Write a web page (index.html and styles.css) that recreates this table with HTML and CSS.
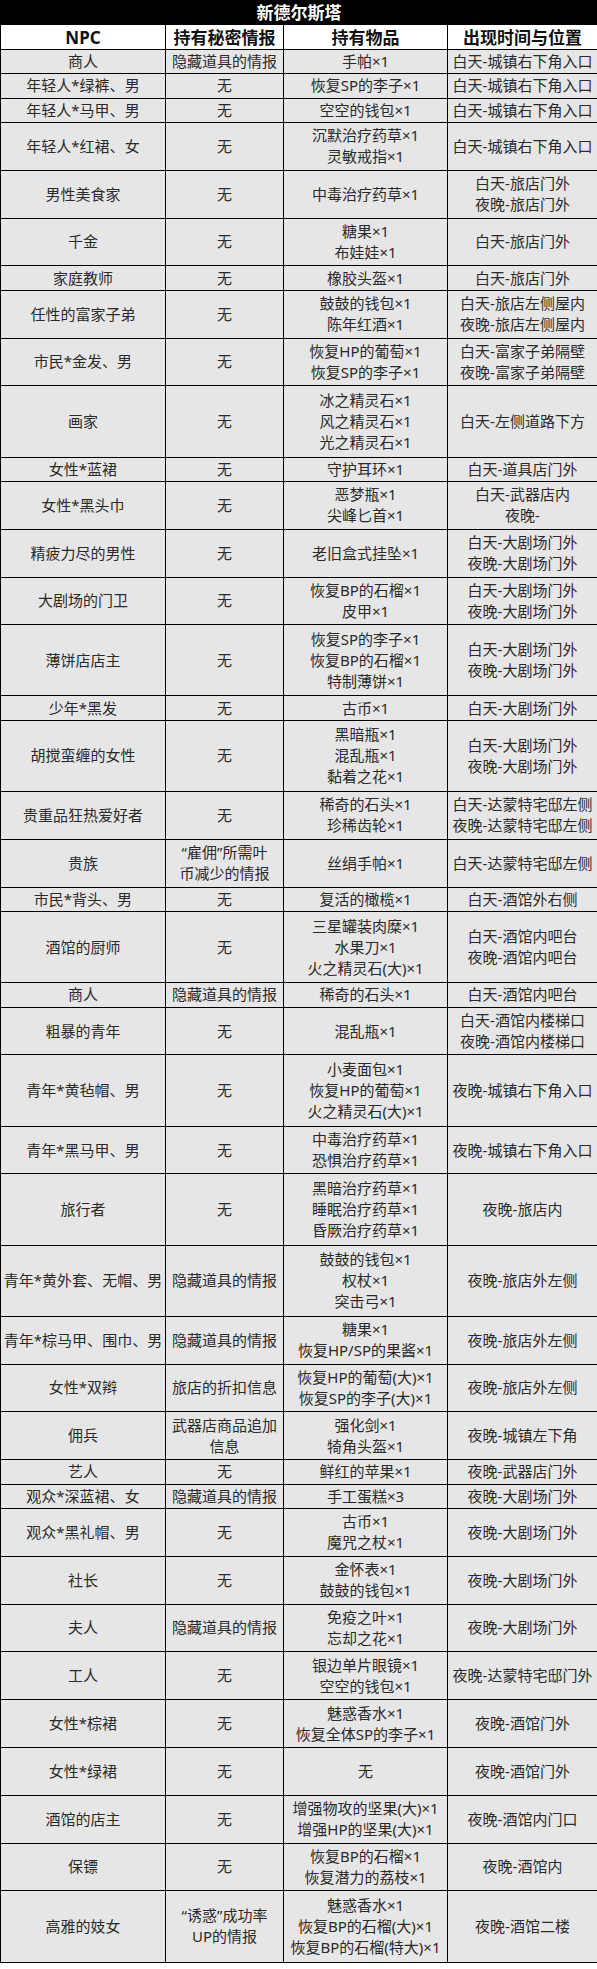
FILE: index.html
```html
<!DOCTYPE html>
<html lang="zh-CN">
<head>
<meta charset="utf-8">
<title>新德尔斯塔</title>
<link rel="stylesheet" href="styles.css">
</head>
<body>
<table class="npc">
  <colgroup>
    <col class="c-npc"><col class="c-info"><col class="c-item"><col class="c-loc">
  </colgroup>
  <thead>
    <tr class="title"><th colspan="4">新德尔斯塔</th></tr>
    <tr class="head"><th>NPC</th><th>持有秘密情报</th><th>持有物品</th><th>出现时间与位置</th></tr>
  </thead>
  <tbody>
    <tr class="r1"><td>商人</td><td>隐藏道具的情报</td><td>手帕×1</td><td>白天-城镇右下角入口</td></tr>
    <tr class="r1"><td>年轻人*绿裤、男</td><td>无</td><td>恢复SP的李子×1</td><td>白天-城镇右下角入口</td></tr>
    <tr class="r1"><td>年轻人*马甲、男</td><td>无</td><td>空空的钱包×1</td><td>白天-城镇右下角入口</td></tr>
    <tr class="r2"><td>年轻人*红裙、女</td><td>无</td><td>沉默治疗药草×1<br>灵敏戒指×1</td><td>白天-城镇右下角入口</td></tr>
    <tr class="r2"><td>男性美食家</td><td>无</td><td>中毒治疗药草×1</td><td>白天-旅店门外<br>夜晚-旅店门外</td></tr>
    <tr class="r2"><td>千金</td><td>无</td><td>糖果×1<br>布娃娃×1</td><td>白天-旅店门外</td></tr>
    <tr class="r1"><td>家庭教师</td><td>无</td><td>橡胶头盔×1</td><td>白天-旅店门外</td></tr>
    <tr class="r2"><td>任性的富家子弟</td><td>无</td><td>鼓鼓的钱包×1<br>陈年红酒×1</td><td>白天-旅店左侧屋内<br>夜晚-旅店左侧屋内</td></tr>
    <tr class="r2"><td>市民*金发、男</td><td>无</td><td>恢复HP的葡萄×1<br>恢复SP的李子×1</td><td>白天-富家子弟隔壁<br>夜晚-富家子弟隔壁</td></tr>
    <tr class="r3"><td>画家</td><td>无</td><td>冰之精灵石×1<br>风之精灵石×1<br>光之精灵石×1</td><td>白天-左侧道路下方</td></tr>
    <tr class="r1"><td>女性*蓝裙</td><td>无</td><td>守护耳环×1</td><td>白天-道具店门外</td></tr>
    <tr class="r2"><td>女性*黑头巾</td><td>无</td><td>恶梦瓶×1<br>尖峰匕首×1</td><td>白天-武器店内<br>夜晚-</td></tr>
    <tr class="r2"><td>精疲力尽的男性</td><td>无</td><td>老旧盒式挂坠×1</td><td>白天-大剧场门外<br>夜晚-大剧场门外</td></tr>
    <tr class="r2"><td>大剧场的门卫</td><td>无</td><td>恢复BP的石榴×1<br>皮甲×1</td><td>白天-大剧场门外<br>夜晚-大剧场门外</td></tr>
    <tr class="r3"><td>薄饼店店主</td><td>无</td><td>恢复SP的李子×1<br>恢复BP的石榴×1<br>特制薄饼×1</td><td>白天-大剧场门外<br>夜晚-大剧场门外</td></tr>
    <tr class="r1"><td>少年*黑发</td><td>无</td><td>古币×1</td><td>白天-大剧场门外</td></tr>
    <tr class="r3"><td>胡搅蛮缠的女性</td><td>无</td><td>黑暗瓶×1<br>混乱瓶×1<br>黏着之花×1</td><td>白天-大剧场门外<br>夜晚-大剧场门外</td></tr>
    <tr class="r2"><td>贵重品狂热爱好者</td><td>无</td><td>稀奇的石头×1<br>珍稀齿轮×1</td><td>白天-达蒙特宅邸左侧<br>夜晚-达蒙特宅邸左侧</td></tr>
    <tr class="r2"><td>贵族</td><td>“雇佣”所需叶<br>币减少的情报</td><td>丝绢手帕×1</td><td>白天-达蒙特宅邸左侧</td></tr>
    <tr class="r1"><td>市民*背头、男</td><td>无</td><td>复活的橄榄×1</td><td>白天-酒馆外右侧</td></tr>
    <tr class="r3"><td>酒馆的厨师</td><td>无</td><td>三星罐装肉糜×1<br>水果刀×1<br>火之精灵石(大)×1</td><td>白天-酒馆内吧台<br>夜晚-酒馆内吧台</td></tr>
    <tr class="r1"><td>商人</td><td>隐藏道具的情报</td><td>稀奇的石头×1</td><td>白天-酒馆内吧台</td></tr>
    <tr class="r2"><td>粗暴的青年</td><td>无</td><td>混乱瓶×1</td><td>白天-酒馆内楼梯口<br>夜晚-酒馆内楼梯口</td></tr>
    <tr class="r3"><td>青年*黄毡帽、男</td><td>无</td><td>小麦面包×1<br>恢复HP的葡萄×1<br>火之精灵石(大)×1</td><td>夜晚-城镇右下角入口</td></tr>
    <tr class="r2"><td>青年*黑马甲、男</td><td>无</td><td>中毒治疗药草×1<br>恐惧治疗药草×1</td><td>夜晚-城镇右下角入口</td></tr>
    <tr class="r3"><td>旅行者</td><td>无</td><td>黑暗治疗药草×1<br>睡眠治疗药草×1<br>昏厥治疗药草×1</td><td>夜晚-旅店内</td></tr>
    <tr class="r3"><td>青年*黄外套、无帽、男</td><td>隐藏道具的情报</td><td>鼓鼓的钱包×1<br>权杖×1<br>突击弓×1</td><td>夜晚-旅店外左侧</td></tr>
    <tr class="r2"><td>青年*棕马甲、围巾、男</td><td>隐藏道具的情报</td><td>糖果×1<br>恢复HP/SP的果酱×1</td><td>夜晚-旅店外左侧</td></tr>
    <tr class="r2"><td>女性*双辫</td><td>旅店的折扣信息</td><td>恢复HP的葡萄(大)×1<br>恢复SP的李子(大)×1</td><td>夜晚-旅店外左侧</td></tr>
    <tr class="r2"><td>佣兵</td><td>武器店商品追加<br>信息</td><td>强化剑×1<br>犄角头盔×1</td><td>夜晚-城镇左下角</td></tr>
    <tr class="r1"><td>艺人</td><td>无</td><td>鲜红的苹果×1</td><td>夜晚-武器店门外</td></tr>
    <tr class="r1"><td>观众*深蓝裙、女</td><td>隐藏道具的情报</td><td>手工蛋糕×3</td><td>夜晚-大剧场门外</td></tr>
    <tr class="r2"><td>观众*黑礼帽、男</td><td>无</td><td>古币×1<br>魔咒之杖×1</td><td>夜晚-大剧场门外</td></tr>
    <tr class="r2"><td>社长</td><td>无</td><td>金怀表×1<br>鼓鼓的钱包×1</td><td>夜晚-大剧场门外</td></tr>
    <tr class="r2"><td>夫人</td><td>隐藏道具的情报</td><td>免疫之叶×1<br>忘却之花×1</td><td>夜晚-大剧场门外</td></tr>
    <tr class="r2"><td>工人</td><td>无</td><td>银边单片眼镜×1<br>空空的钱包×1</td><td>夜晚-达蒙特宅邸门外</td></tr>
    <tr class="r2"><td>女性*棕裙</td><td>无</td><td>魅惑香水×1<br>恢复全体SP的李子×1</td><td>夜晚-酒馆门外</td></tr>
    <tr class="r2"><td>女性*绿裙</td><td>无</td><td>无</td><td>夜晚-酒馆门外</td></tr>
    <tr class="r2"><td>酒馆的店主</td><td>无</td><td>增强物攻的坚果(大)×1<br>增强HP的坚果(大)×1</td><td>夜晚-酒馆内门口</td></tr>
    <tr class="r2"><td>保镖</td><td>无</td><td>恢复BP的石榴×1<br>恢复潜力的荔枝×1</td><td>夜晚-酒馆内</td></tr>
    <tr class="r3"><td>高雅的妓女</td><td>“诱惑”成功率<br>UP的情报</td><td>魅惑香水×1<br>恢复BP的石榴(大)×1<br>恢复BP的石榴(特大)×1</td><td>夜晚-酒馆二楼</td></tr>
  </tbody>
</table>
</body>
</html>
```

FILE: styles.css
```css
html, body {
  margin: 0;
  padding: 0;
  background: #ffffff;
}

.npc {
  width: 597px;
  border-collapse: collapse;
  table-layout: fixed;
  font-family: "Noto Sans", "Noto Sans CJK SC", sans-serif;
  color: #2a2a2a;
  font-size: 15px;
  line-height: 21px;
}

.c-npc { width: 165px; }
.c-info { width: 118px; }
.c-item { width: 164px; }
.c-loc { width: 150px; }

.npc th,
.npc td {
  border: 1px solid #000;
  padding: 0;
  text-align: center;
  vertical-align: middle;
  white-space: nowrap;
  overflow: hidden;
}

.npc td {
  background: #e6e6e6;
}

.title th {
  background: #000;
  color: #fff;
  font-size: 17px;
  font-weight: 700;
  height: 23.4px;
}

.head th {
  background: #fff;
  color: #111;
  font-size: 17px;
  font-weight: 700;
  height: 23.4px;
}

.r1 td { height: 23.4px; }
.r2 td { height: 46.8px; }
.r3 td { height: 70.2px; }
```
